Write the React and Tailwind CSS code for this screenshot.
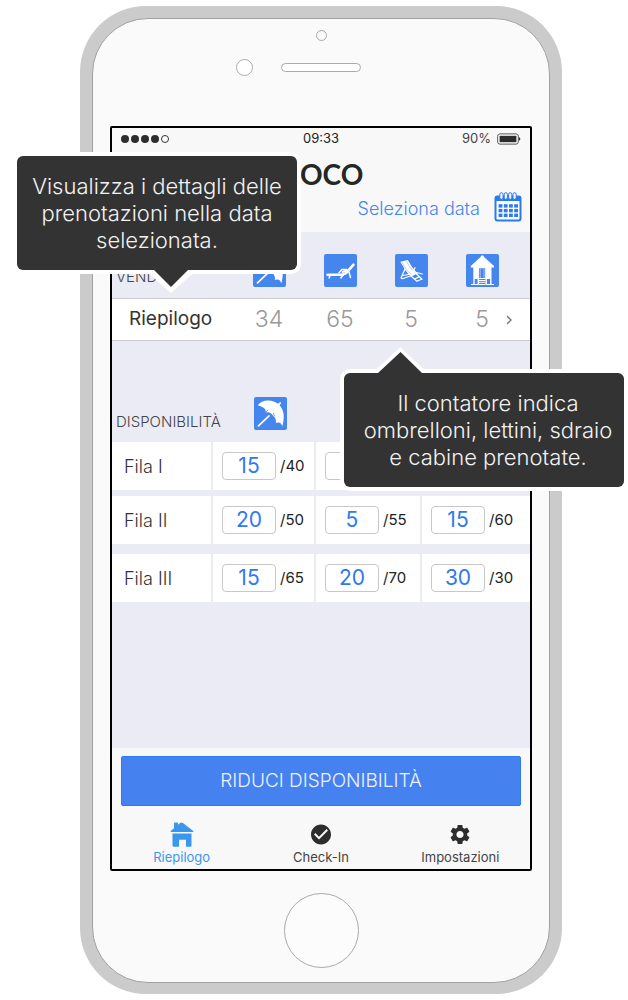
import React from "react";
import { MdCheckCircle, MdSettings } from "react-icons/md";

const tile = "block h-[33px] w-[33px] shrink-0";

function Umbrella() {
  return (
    <svg viewBox="0 0 33 33" className={tile} role="img" aria-label="Ombrelloni">
      <rect width="33" height="33" rx="2" fill="#4485ee" />
      <path
        d="M3.8 8.3C6 5 10 3.2 14.5 3.4c3.6.2 6.900 1.500 9.500 3.400l2.300-1.900 1 1-1.700 2.300c2.700 3 4.300 7.300 4.100 11.800-.1 3.600-.5 6.700-1.600 9.600-.2-2.300-1.300-3.600-3.300-4.100-1.300-.3-2.100.2-2.900.6.300-2.800-.2-4.900-1.800-6.400l-3-3.100c-1.700-1.300-3.500-1.600-5.700-1 .5-1.300.4-2.500-.5-3.600-1.700-1.800-4.200-2.600-7.100-3.700z"
        fill="#fff"
      />
      <path d="M4.500 28.800L15 18.800" stroke="#fff" strokeWidth="1.700" strokeLinecap="round" />
      <path d="M10.800 15.800l3.300-2.600M20.500 19.200l-1.300-3.300" stroke="#4485ee" strokeWidth=".8" />
    </svg>
  );
}

function Lounger() {
  return (
    <svg viewBox="0 0 33 33" className={tile} role="img" aria-label="Lettini">
      <rect width="33" height="33" rx="2" fill="#4485ee" />
      <g stroke="#fff" fill="none" strokeLinecap="round" strokeLinejoin="round">
        <path d="M3.500 20.800h13.500c2.500-.1 4.300-1 6-2.600l6.500-7.500" strokeWidth="2.600" />
        <path d="M14.800 19l3-3.500h5" strokeWidth="1.300" />
        <path d="M18.500 18l4-1.500" strokeWidth="2" />
        <path d="M6 21l-.8 3M19.500 20.500l-2.700 3.500M25 18l1.500 5.500" strokeWidth="1.500" />
      </g>
    </svg>
  );
}

function DeckChair() {
  return (
    <svg viewBox="0 0 33 33" className={tile} role="img" aria-label="Sdraio">
      <rect width="33" height="33" rx="2" fill="#4485ee" />
      <path d="M5.300 7.800l7.500-1.800 2 3.300c2 3.700 4.800 7.300 8.200 10.200l-6.800 2.800c-3.800-2.800-6.400-6.500-8.300-10.400z" fill="#fff" />
      <g stroke="#4485ee" strokeWidth=".4" fill="none">
        <path d="M7.300 8.500c2.200 4.900 5.500 9.600 9.800 12.700M11.600 7.500c2.200 4.600 5.400 8.500 9.400 11.900" />
      </g>
      <g stroke="#fff" strokeWidth="1.200" fill="none" strokeLinecap="round" strokeLinejoin="round">
        <path d="M10 15l-4 9 1.500.8L18 21M20 13.500l-1.500 3.300M17.500 17.500l9.800 2.500M8 21.500l8.500-1.500" />
        <path d="M16 22l6 5.300M21.500 20l5.500 5.300M19.500 25l4.500-2.100M22 27.300l4.500-2" />
      </g>
    </svg>
  );
}

function Hut() {
  return (
    <svg viewBox="0 0 33 33" className={tile} role="img" aria-label="Cabine">
      <rect width="33" height="33" rx="2" fill="#4485ee" />
      <path d="M15.300 1.500h2l1 1.700L28 12v1.400h-2.500V25H7.300V13.400H4.800V12l9.500-8.800z" fill="#fff" />
      <rect x="13" y="14.300" width="6.200" height="9.700" fill="#4485ee" />
      <path d="M14.200 15v9M18 15v9" stroke="#fff" strokeWidth=".5" />
      <path d="M8 25v5.500M12.300 25v5.500M20.200 25v5.500M24.800 25v5.500" stroke="#fff" strokeWidth="1.400" />
      <path d="M13 26.500h6.500M13 28.300h6.500M5 30.500h7.500M13 30.500h6.500M20 30.500h8" stroke="#fff" strokeWidth="1" />
    </svg>
  );
}

function Calendar() {
  return (
    <svg viewBox="0 0 28 30" className="block h-[30px] w-7" aria-hidden="true">
      <rect x="1.500" y="4.500" width="25" height="24" rx="2" fill="#fff" stroke="#2b7af0" strokeWidth="2" />
      <path d="M1 9V6q0-2 2-2h22q2 0 2 2v3z" fill="#2b7af0" />
      <g fill="#f7f7f7" stroke="#2b7af0" strokeWidth="1">
        <rect x="5.800" y=".7" width="3.200" height="6.600" rx="1.600" />
        <rect x="10.200" y=".7" width="3.200" height="6.600" rx="1.600" />
        <rect x="14.600" y=".7" width="3.200" height="6.600" rx="1.600" />
        <rect x="19" y=".7" width="3.200" height="6.600" rx="1.600" />
      </g>
      <g fill="#2b7af0">
        {[12.2, 16.9, 21.6].map((y) =>
          [4.600, 9.800, 15, 20.200].map((x) => <rect key={`${x}-${y}`} x={x} y={y} width="3.800" height="3.400" />)
        )}
      </g>
    </svg>
  );
}

function HomeIcon() {
  return (
    <svg viewBox="0 0 24 25" className="block h-[25px] w-6" fill="#3b97ee" aria-hidden="true">
      <path d="M4 1.500Q4 .5 5 .5h2q1 0 1 1v1.300L10.200.9q1.300-1 2.700 0L23.300 9q.6 1-.6 1H1.300Q.1 10 .7 9L4 6.200z" />
      <path d="M2.500 11.600h19v11.900q0 1.200-1.200 1.200H16v-7H9v7H3.700q-1.200 0-1.200-1.200z" />
    </svg>
  );
}

const booked = [
  { Icon: Umbrella, count: 34 },
  { Icon: Lounger, count: 65 },
  { Icon: DeckChair, count: 5 },
  { Icon: Hut, count: 5 },
];

const rows = [
  { name: "Fila I", gap: "border-b-[6px]", cells: [["15", "/40"], ["", ""], ["", ""]] },
  { name: "Fila II", gap: "border-b-[10px]", cells: [["20", "/50"], ["5", "/55"], ["15", "/60"]] },
  { name: "Fila III", gap: "border-b-0", cells: [["15", "/65"], ["20", "/70"], ["30", "/30"]] },
];

function StatusBar() {
  return (
    <div className="grid h-[22px] grid-cols-3 items-center px-[9px] text-[13px] text-[#222]">
      <svg viewBox="0 0 50 10" className="h-2.5 w-[50px]" aria-hidden="true">
        <g fill="#2d2d2d">
          <circle cx="4" cy="5" r="4" />
          <circle cx="14" cy="5" r="4" />
          <circle cx="24" cy="5" r="4" />
          <circle cx="34" cy="5" r="4" />
        </g>
        <circle cx="44" cy="5" r="3.500" fill="#fff" stroke="#333" />
      </svg>
      <span className="text-center">09:33</span>
      <span className="flex items-center justify-end gap-1.5 text-[#444]">
        90%
        <svg viewBox="0 0 24 12" className="h-3 w-6" aria-hidden="true">
          <rect x=".7" y=".9" width="20.600" height="10.200" rx="2.200" fill="#fff" stroke="#555" />
          <rect x="2.600" y="2.800" width="16.800" height="6.400" fill="#2d2d2d" />
          <path d="M22 4.300q1.300.3 1.300 1.700T22 7.700z" fill="#333" />
        </svg>
      </span>
    </div>
  );
}

function Bookings() {
  return (
    <section>
      <div className="flex h-[66px] items-end bg-[#ebebf5] pb-[11px]">
        <h2 className="flex-1 pl-1 text-[15px] leading-5 font-light text-[#444]">VEND</h2>
        <div className="flex gap-[35px]">
          {booked.map(({ Icon }, i) => (
            <div key={i} className="flex w-9 justify-center">
              <Icon />
            </div>
          ))}
        </div>
        <div className="w-[30px]" />
      </div>
      <button className="flex h-[43px] w-full items-center border-y border-[#ccc] bg-white text-left">
        <span className="flex-1 pl-[17px] text-[19px] text-[#333]">Riepilogo</span>
        <span className="flex gap-[35px]">
          {booked.map(({ count }, i) => (
            <span key={i} className="w-9 text-center text-[23px] font-light text-[#999]">
              {count}
            </span>
          ))}
        </span>
        <span className="w-[30px] pl-1.5">
          <svg viewBox="0 0 6 10" className="h-2.5 w-1.5" fill="none" stroke="#777" strokeWidth="1.400" aria-hidden="true">
            <path d="M1 1l4 4-4 4" />
          </svg>
        </span>
      </button>
    </section>
  );
}

function Availability() {
  return (
    <table className="w-full table-fixed border-separate border-spacing-0 bg-[#ebebf5] text-left">
      <thead>
        <tr className="h-[101px] align-bottom">
          <th className="w-[101px] pb-[10px] pl-1 text-[15px] leading-5 font-light whitespace-nowrap text-[#444]">DISPONIBILITÀ</th>
          <th className="w-[103px] pb-3 pl-[41px]"><Umbrella /></th>
          <th className="w-[106px] pb-3 pl-9"><Lounger /></th>
          <th className="pb-3 pl-9"><DeckChair /></th>
        </tr>
      </thead>
      <tbody>
        {rows.map((row) => (
          <tr key={row.name}>
            <th className={`border-r-2 border-[#ebebf5] bg-white p-0 pl-3 text-[18px] font-light text-[#333] ${row.gap}`}>{row.name}</th>
            {row.cells.map(([value, total], i) => (
              <td key={i} className={`border-r-2 border-[#ebebf5] bg-white p-0 last:border-r-0 ${row.gap}`}>
                <label className="flex h-12 items-center gap-1 pl-[10px] text-[15px] text-[#222] first:pl-[9px]">
                  <input
                    defaultValue={value}
                    aria-label={row.name}
                    className="h-7 w-[54px] rounded-[4px] border border-[#c8c8c8] bg-white p-0 text-center text-[21px] text-[#2f78ee] outline-none"
                  />
                  {total}
                </label>
              </td>
            ))}
          </tr>
        ))}
      </tbody>
    </table>
  );
}

function Tooltip({ place, text, children }) {
  return (
    <div role="tooltip" className={`absolute h-[114px] w-[280px] rounded-[6px] bg-[#333] ring-4 ring-white ${place}`}>
      <p className={`pt-[17px] text-center text-[22px] leading-[27px] font-light whitespace-nowrap text-[#f2f2f2] ${text}`}>{children}</p>
    </div>
  );
}

export default function App() {
  return (
    <main className="relative mx-auto max-w-[628px] bg-white pt-1.5 pr-[66px] pb-1.5 pl-20 font-['Inter','Liberation_Sans',sans-serif]">
      <div className="rounded-[66px] bg-[#cbcbcb] p-3 pb-[11px]">
        <div className="rounded-[56px] border border-[#a0a0a0] bg-[#fafafa] px-[17px]">
          <div className="flex h-[107px] flex-col items-center pt-[11px]">
            <div className="h-[11px] w-[11px] rounded-full border border-[#aaa]" />
            <div className="mt-[18px] flex items-center">
              <div className="h-[17px] w-[17px] rounded-full border border-[#aaa] bg-white" />
              <div className="ml-7 mr-[45px] h-[9px] w-20 rounded-full border border-[#aaa] bg-white" />
            </div>
          </div>

          <div className="rounded-[2px] border-2 border-black bg-[#f8f8f8]">
            <StatusBar />
            <h1 className="mt-1.5 h-9 pl-[188px] font-['Lato',sans-serif] text-[28px] leading-9 font-bold text-[#262626]">OCO</h1>
            <div className="flex justify-end pr-2 pb-2.5">
              <button className="flex h-[30px] items-center gap-[14px] text-[18px] font-light text-[#4485ee]">
                <span className="pt-[3px]">Seleziona data</span>
                <Calendar />
              </button>
            </div>
            <Bookings />
            <Availability />
            <div className="h-[146px] bg-[#ebebf5]" />
            <div className="px-[9px] pt-2">
              <button className="h-[50px] w-full rounded-[2px] border border-[#2b7af0] bg-[#4581ef] text-[19px] font-light text-[#eef3ff]">
                RIDUCI DISPONIBILITÀ
              </button>
            </div>
            <nav className="grid grid-cols-3 pt-4 pb-1 text-[13px] leading-4 text-[#444]">
              <a href="#riepilogo" className="flex flex-col items-center gap-0.5 text-[#3b97ee]">
                <HomeIcon />
                Riepilogo
              </a>
              <a href="#check-in" className="flex flex-col items-center gap-0.5">
                <MdCheckCircle className="h-[25px] w-6 text-[#2d2d2d]" />
                Check-In
              </a>
              <a href="#impostazioni" className="flex flex-col items-center gap-0.5">
                <MdSettings className="h-[25px] w-6 text-[#2d2d2d]" />
                Impostazioni
              </a>
            </nav>
          </div>

          <div className="flex h-[111px] justify-center pt-[22px]">
            <button aria-label="Home" className="h-[75px] w-[75px] rounded-full border border-[#aaa] bg-[#fcfcfc]" />
          </div>
        </div>
      </div>

      <Tooltip place="top-[156px] left-[17px]" text="px-2">
        Visualizza i dettagli delle
        <br />
        prenotazioni nella data
        <br />
        selezionata.
      </Tooltip>
      <svg viewBox="0 0 52 26" className="absolute top-[269px] left-[145px] h-[26px] w-[52px]" aria-hidden="true">
        <path d="M4 4.500h44L26 24z" fill="#fff" />
        <path d="M9 0h34v1L26 18 9 1z" fill="#333" />
      </svg>

      <Tooltip place="top-[373px] left-[344px]" text="pl-2">
        Il contatore indica
        <br />
        ombrelloni, lettini, sdraio
        <br />
        e cabine prenotate.
      </Tooltip>
      <svg viewBox="0 0 60 28" className="absolute top-[346px] left-[370px] h-7 w-[60px]" aria-hidden="true">
        <path d="M6 23.500h48L30.500 1z" fill="#fff" />
        <path d="M8 28h44v-1L30.500 6 8 27z" fill="#333" />
      </svg>
    </main>
  );
}
